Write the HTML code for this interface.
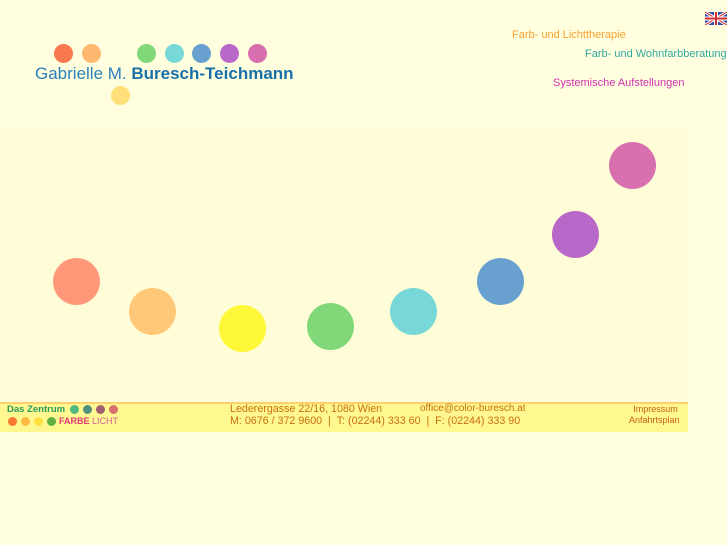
<!DOCTYPE html>
<html><head><style>
body{margin:0;width:727px;height:545px;background:#FFFFE0;position:relative;overflow:hidden;font-family:"Liberation Sans",sans-serif}
.d{position:absolute;border-radius:50%}
.a{position:absolute;white-space:nowrap}
</style></head><body>
<div style="position:absolute;left:0;top:129px;width:688px;height:273px;background:#FFFDD8"></div>
<div class="d" style="left:54px;top:44px;width:19px;height:19px;background:#F87850"></div>
<div class="d" style="left:82px;top:44px;width:19px;height:19px;background:#FFB870"></div>
<div class="d" style="left:137px;top:44px;width:19px;height:19px;background:#80D878"></div>
<div class="d" style="left:165px;top:44px;width:19px;height:19px;background:#78D8D8"></div>
<div class="d" style="left:192px;top:44px;width:19px;height:19px;background:#68A0D0"></div>
<div class="d" style="left:220px;top:44px;width:19px;height:19px;background:#B868C8"></div>
<div class="d" style="left:248px;top:44px;width:19px;height:19px;background:#D870B0"></div>
<div class="d" style="left:111px;top:86px;width:19px;height:19px;background:#FFE078"></div>
<div class="a" style="left:35px;top:64px;font-size:17px;color:#2A80B8">Gabrielle M. <b style="color:#1A70A8">Buresch-Teichmann</b></div>
<div class="a" style="left:512px;top:29px;font-size:11px;color:#F8A030">Farb- und Lichttherapie</div>
<div class="a" style="left:585px;top:48px;font-size:11px;color:#30A8A0">Farb- und Wohnfarbberatung</div>
<div class="a" style="left:553px;top:77px;font-size:11px;color:#D030B0">Systemische Aufstellungen</div>
<svg style="position:absolute;left:705px;top:12px" width="22" height="13"><rect width="22" height="13" fill="#3848a0"/><path d="M0 0L22 13M22 0L0 13" stroke="#fff" stroke-width="3"/><path d="M0 0L22 13M22 0L0 13" stroke="#d03030" stroke-width="1"/><path d="M11 0V13M0 6.5H22" stroke="#fff" stroke-width="4"/><path d="M11 0V13M0 6.5H22" stroke="#d03030" stroke-width="2"/></svg>
<div class="d" style="left:53px;top:258px;width:47px;height:47px;background:#FF9878"></div>
<div class="d" style="left:129px;top:288px;width:47px;height:47px;background:#FFC878"></div>
<div class="d" style="left:219px;top:305px;width:47px;height:47px;background:#FFF838"></div>
<div class="d" style="left:307px;top:303px;width:47px;height:47px;background:#80D878"></div>
<div class="d" style="left:390px;top:288px;width:47px;height:47px;background:#78D8D8"></div>
<div class="d" style="left:477px;top:258px;width:47px;height:47px;background:#68A0D0"></div>
<div class="d" style="left:552px;top:211px;width:47px;height:47px;background:#B868C8"></div>
<div class="d" style="left:609px;top:142px;width:47px;height:47px;background:#D870B0"></div>
<div style="position:absolute;left:0;top:402px;width:688px;height:28px;background:#FFF890;border-top:2px solid #FFD070"></div>
<div class="a" style="left:7px;top:404px;font-size:9.5px;font-weight:bold;color:#2A9A60">Das Zentrum</div>
<div class="d" style="left:70px;top:405px;width:9px;height:9px;background:#50B880"></div>
<div class="d" style="left:83px;top:405px;width:9px;height:9px;background:#509080"></div>
<div class="d" style="left:96px;top:405px;width:9px;height:9px;background:#A06070"></div>
<div class="d" style="left:109px;top:405px;width:9px;height:9px;background:#D87070"></div>
<div class="d" style="left:8px;top:417px;width:9px;height:9px;background:#F87830"></div>
<div class="d" style="left:21px;top:417px;width:9px;height:9px;background:#FFB840"></div>
<div class="d" style="left:34px;top:417px;width:9px;height:9px;background:#FFE040"></div>
<div class="d" style="left:47px;top:417px;width:9px;height:9px;background:#60B040"></div>
<div class="a" style="left:59px;top:416px;font-size:9px;color:#E03878"><b>FARBE</b> <span style="color:#D060A0">LICHT</span></div>
<div class="a" style="left:230px;top:403px;font-size:10.7px;line-height:12px;color:#C87010">Lederergasse 22/16, 1080 Wien<br>M: 0676 / 372 9600 &nbsp;| &nbsp;T: (02244) 333 60 &nbsp;| &nbsp;F: (02244) 333 90</div>
<div class="a" style="left:420px;top:403px;font-size:10px;color:#C87010">office@color-buresch.at</div>
<div class="a" style="left:629px;top:404px;font-size:9px;line-height:11px;color:#C86010;text-align:center">&nbsp;Impressum<br>Anfahrtsplan</div>
</body></html>
